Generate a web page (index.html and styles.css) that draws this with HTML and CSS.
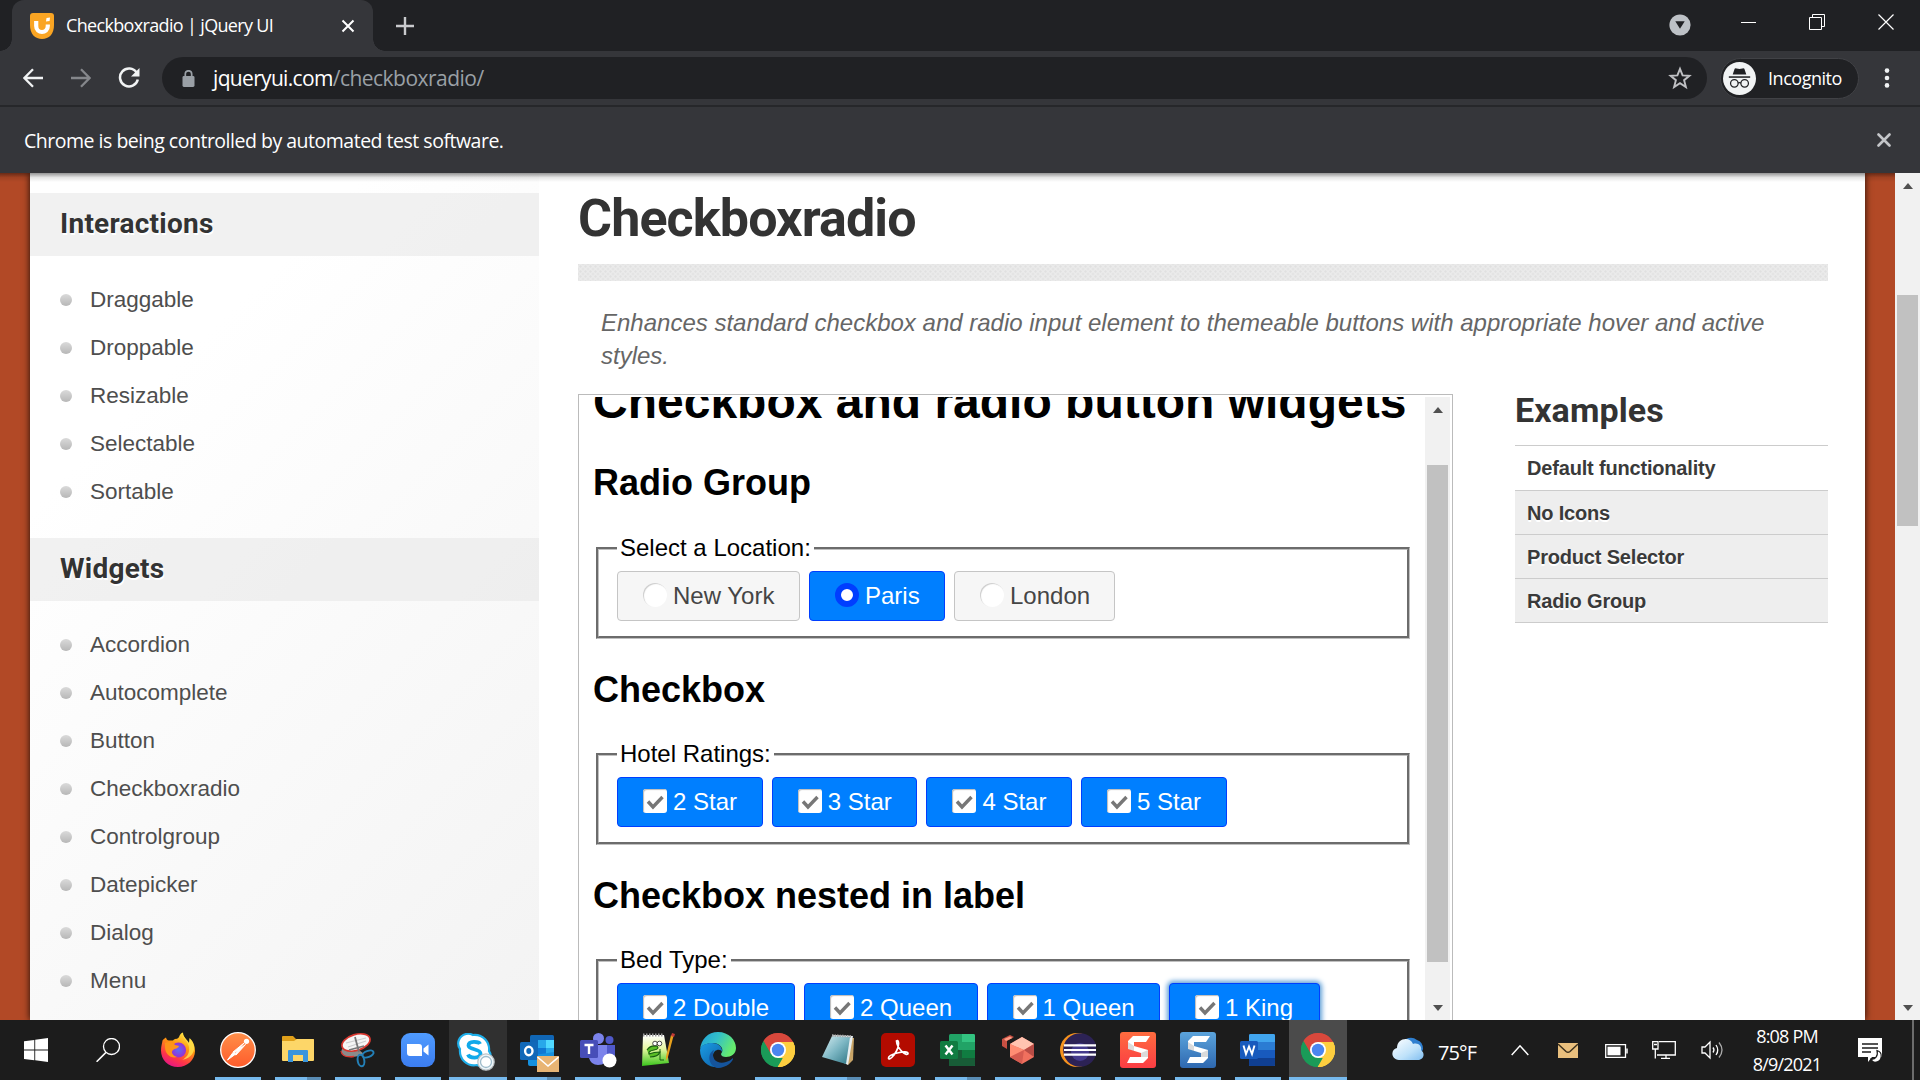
FILE: index.html
```html
<!DOCTYPE html>
<html lang="en">
<head>
<meta charset="utf-8">
<title>Checkboxradio | jQuery UI</title>
<link rel="stylesheet" href="styles.css">
</head>
<body>
<svg class="defs" width="0" height="0" aria-hidden="true">
  <defs>
    <linearGradient id="gFox" x1="0.8" y1="0" x2="0.3" y2="1"><stop offset="0" stop-color="#fff44f"/><stop offset=".4" stop-color="#ff980e"/><stop offset=".75" stop-color="#ff3647"/><stop offset="1" stop-color="#e31587"/></linearGradient>
    <radialGradient id="gGlobe"><stop offset="0" stop-color="#5b6df8"/><stop offset="1" stop-color="#9a2fd0"/></radialGradient>
    <linearGradient id="gPost" x1="0" y1="0" x2="0" y2="1"><stop offset="0" stop-color="#ff8f4a"/><stop offset="1" stop-color="#ff5b2b"/></linearGradient>
    <linearGradient id="gZoom" x1="0" y1="0" x2="0" y2="1"><stop offset="0" stop-color="#4f9bff"/><stop offset="1" stop-color="#3c7df0"/></linearGradient>
    <linearGradient id="gEdgeTop" x1="0" y1="0" x2="1" y2=".4"><stop offset="0" stop-color="#1f9fd8"/><stop offset=".5" stop-color="#33c0c8"/><stop offset="1" stop-color="#66eb6e"/></linearGradient>
    <linearGradient id="gEdgeBody" x1="0" y1="0" x2="1" y2="1"><stop offset="0" stop-color="#1b9de2"/><stop offset="1" stop-color="#0c59a4"/></linearGradient>
    <linearGradient id="gRed" x1="0" y1="0" x2="0" y2="1"><stop offset="0" stop-color="#ff6c3f"/><stop offset="1" stop-color="#fb3d44"/></linearGradient>
    <linearGradient id="gBlue" x1="0" y1="0" x2="0" y2="1"><stop offset="0" stop-color="#5ba4dc"/><stop offset="1" stop-color="#2e68b0"/></linearGradient>
    <linearGradient id="gCloud" x1="0" y1="0" x2="1" y2="1"><stop offset="0" stop-color="#ffffff"/><stop offset=".6" stop-color="#bfe2fa"/><stop offset="1" stop-color="#7fbdf0"/></linearGradient>
    <linearGradient id="gNote" x1="0" y1="0" x2="1" y2="1"><stop offset="0" stop-color="#d8eef2"/><stop offset=".5" stop-color="#7db7c4"/><stop offset="1" stop-color="#2f7685"/></linearGradient>
    <linearGradient id="gFrog" x1="0" y1="0" x2="0" y2="1"><stop offset="0" stop-color="#fff"/><stop offset=".45" stop-color="#e6f7a0"/><stop offset="1" stop-color="#39c51b"/></linearGradient>
    <symbol id="chrome" viewBox="0 0 34 34">
      <path d="M17 17 L2.3 8.5 A17 17 0 0 1 31.7 8.5 Z" fill="#d8483c"/>
      <path d="M17 17 L31.7 8.5 A17 17 0 0 1 17 34 Z" fill="#fdce3f"/>
      <path d="M17 17 L17 34 A17 17 0 0 1 2.3 8.5 Z" fill="#1a9b58"/>
      <path d="M17 9 H32 A17 17 0 0 1 17 34 L24 21 Z" fill="#fdce3f"/>
      <path d="M2.6 8 L10 21 L17 25 H24 L16.5 34 A17 17 0 0 1 2.6 8 Z" fill="#1a9b58"/>
      <path d="M2.6 8 A17 17 0 0 1 32 9 H17 L10 21 Z" fill="#d8483c"/>
      <path d="M24 21 L16.7 34 A17 17 0 0 0 32 9 H17 Z" fill="#fdce3f"/>
      <circle cx="17" cy="17" r="8" fill="#fff"/><circle cx="17" cy="17" r="6.2" fill="#4a86f0"/>
    </symbol>
    <symbol id="tick" viewBox="0 0 24 24"><path d="M5 12.5 L10 18 L19.5 8" fill="none" stroke="#777" stroke-width="3.4"/></symbol>
    <symbol id="snag" viewBox="0 0 36 36">
      <path d="M13 4 H30 L26 10 H14 V14 L28 18 V26 L23 31 H7 L10 25 H21 V21 L8 17 V9 Z" fill="#fff"/>
      <path d="M8 10 L14 14 V19 L8 17 Z M21 21 L28 18 V25 L21 25 Z" fill="#000" opacity=".14"/>
    </symbol>
  </defs>
</svg>

<div class="screen">
  <header class="browser">
    <div class="tabstrip">
      <div class="tab">
        <svg class="favicon" viewBox="0 0 24 26"><path d="M0 3 Q0 0 3 0 H21 Q24 0 24 3 V12 C24 21 19 26 12 26 C5 26 0 21 0 12Z" fill="#faa523"/><path d="M6.2 8 V13 C6.2 21 17.8 21 17.8 13 V11.5" fill="none" stroke="#fff" stroke-width="4.2"/><path d="M16.5 5 L20 4.5 L19.6 8 L16 8.5Z" fill="#fff"/></svg>
        <span class="tab-title">Checkboxradio | jQuery UI</span>
        <svg class="tab-close" viewBox="0 0 14 14"><path d="M1.5 1.5 L12.5 12.5 M12.5 1.5 L1.5 12.5" stroke="#fff" stroke-width="2"/></svg>
      </div>
      <svg class="newtab" viewBox="0 0 18 18"><path d="M9 0 V18 M0 9 H18" stroke="#c9cacd" stroke-width="2.4"/></svg>
      <div class="winctl">
        <svg class="ctl-search" viewBox="0 0 22 22"><circle cx="11" cy="11" r="10.6" fill="#bdc1c6"/><path d="M6.3 7.3 H15.7 L11 14.8Z" fill="#202124"/></svg>
        <svg class="ctl-min" viewBox="0 0 16 16"><path d="M0 8.5 H15" stroke="#fff"/></svg>
        <svg class="ctl-max" viewBox="0 0 16 16"><path d="M.5 3.5 H12.5 V15.5 H.5Z M3.5 3.5 V.5 H15.5 V12.5 H12.5" fill="none" stroke="#fff"/></svg>
        <svg class="ctl-close" viewBox="0 0 16 16"><path d="M.5 .5 L15.5 15.5 M15.5 .5 L.5 15.5" stroke="#fff" stroke-width="1.2"/></svg>
      </div>
    </div>
    <div class="toolbar">
      <svg class="nav-back" viewBox="0 0 20 20"><path d="M20 10 H2 M10 1.2 L1.4 10 L10 18.8" fill="none" stroke="#f1f3f4" stroke-width="2.3"/></svg>
      <svg class="nav-fwd" viewBox="0 0 20 20"><path d="M0 10 H18 M10 1.2 L18.6 10 L10 18.8" fill="none" stroke="#85878b" stroke-width="2.3"/></svg>
      <svg class="nav-reload" viewBox="0 0 22 22"><path d="M18.6 5.6 A9 9 0 1 0 19.8 12.5" fill="none" stroke="#f1f3f4" stroke-width="2.5"/><path d="M21.5 1 V9.4 H13Z" fill="#f1f3f4"/></svg>
      <div class="omnibox">
        <svg class="lock" viewBox="0 0 12 17"><rect x="0" y="6" width="12" height="11" rx="1.4" fill="#9aa0a6"/><path d="M2.8 7 V4 A3.2 3.2 0 0 1 9.2 4 V7" fill="none" stroke="#9aa0a6" stroke-width="1.7"/></svg>
        <span class="url"><span class="host">jqueryui.com</span><span class="path">/checkboxradio/</span></span>
        <svg class="star" viewBox="0 0 24 24"><path d="M12 2.8 L14.6 9.4 L21.4 9.8 L16.1 14.2 L17.9 21 L12 17.2 L6.100 21 L7.9 14.2 L2.6 9.8 L9.4 9.4Z" fill="none" stroke="#c0c1c4" stroke-width="1.9"/></svg>
      </div>
      <div class="incognito">
        <svg viewBox="0 0 34 34"><circle cx="17" cy="17" r="17" fill="#f1f3f4"/><path d="M12 7 Q12.6 6 14 6.7 Q17 7.6 20 6.7 Q21.4 6 22 7 L24 13 H10Z" fill="#202124"/><path d="M6 15.5 H28" stroke="#202124" stroke-width="1.6"/><circle cx="11.7" cy="22" r="3.9" fill="none" stroke="#202124" stroke-width="1.3"/><circle cx="22.3" cy="22" r="3.9" fill="none" stroke="#202124" stroke-width="1.3"/><path d="M15.4 21.7 Q17 20.7 18.6 21.7" fill="none" stroke="#202124" stroke-width="1.3"/></svg>
        <span>Incognito</span>
      </div>
      <svg class="dots" viewBox="0 0 6 20"><circle cx="3" cy="2.6" r="2.3" fill="#f1f3f4"/><circle cx="3" cy="10" r="2.3" fill="#f1f3f4"/><circle cx="3" cy="17.4" r="2.3" fill="#f1f3f4"/></svg>
    </div>
    <div class="infobar">
      <span>Chrome is being controlled by automated test software.</span>
      <svg viewBox="0 0 14 14"><path d="M1.5 1.5 L12.5 12.5 M12.5 1.5 L1.5 12.5" stroke="#c4c6c9" stroke-width="2.6" stroke-linecap="round"/></svg>
    </div>
  </header>

  <div class="viewport">
    <div class="page">
      <aside class="sidebar">
        <h3 class="side-head">Interactions</h3>
        <ul class="side-list"><li>Draggable</li><li>Droppable</li><li>Resizable</li><li>Selectable</li><li>Sortable</li></ul>
        <h3 class="side-head widgets">Widgets</h3>
        <ul class="side-list"><li>Accordion</li><li>Autocomplete</li><li>Button</li><li>Checkboxradio</li><li>Controlgroup</li><li>Datepicker</li><li>Dialog</li><li>Menu</li></ul>
      </aside>
      <main class="content">
        <h1 class="entry-title">Checkboxradio</h1>
        <div class="rule"></div>
        <p class="desc">Enhances standard checkbox and radio input element to themeable buttons with appropriate hover and active<br>styles.</p>
        <div class="columns">
          <div class="demo-frame">
            <div class="demo">
              <h1 class="demo-title">Checkbox and radio button widgets</h1>
              <h2>Radio Group</h2>
              <fieldset><legend>Select a Location:</legend>
                <div class="row">
                  <div class="btn w-ny"><i class="radio"></i>New York</div>
                  <div class="btn on w-paris"><i class="radio dot"></i>Paris</div>
                  <div class="btn w-lon"><i class="radio"></i>London</div>
                </div>
              </fieldset>
              <h2>Checkbox</h2>
              <fieldset><legend>Hotel Ratings:</legend>
                <div class="row">
                  <div class="btn on w-star"><svg class="check"><use href="#tick"/></svg>2 Star</div>
                  <div class="btn on w-star"><svg class="check"><use href="#tick"/></svg>3 Star</div>
                  <div class="btn on w-star"><svg class="check"><use href="#tick"/></svg>4 Star</div>
                  <div class="btn on w-star"><svg class="check"><use href="#tick"/></svg>5 Star</div>
                </div>
              </fieldset>
              <h2>Checkbox nested in label</h2>
              <fieldset><legend>Bed Type:</legend>
                <div class="row">
                  <div class="btn on w-double"><svg class="check"><use href="#tick"/></svg>2 Double</div>
                  <div class="btn on w-queen"><svg class="check"><use href="#tick"/></svg>2 Queen</div>
                  <div class="btn on w-queen"><svg class="check"><use href="#tick"/></svg>1 Queen</div>
                  <div class="btn on focus w-king"><svg class="check"><use href="#tick"/></svg>1 King</div>
                </div>
              </fieldset>
            </div>
            <div class="scrollbar inner"><i class="up"></i><i class="thumb"></i><i class="down"></i></div>
          </div>
          <nav class="examples">
            <h2>Examples</h2>
            <ul><li class="current">Default functionality</li><li>No Icons</li><li>Product Selector</li><li>Radio Group</li></ul>
          </nav>
        </div>
      </main>
    </div>
    <div class="scrollbar outer"><i class="up"></i><i class="thumb"></i><i class="down"></i></div>
  </div>

  <footer class="taskbar">
    <div class="cell wide"><svg width="24" height="24" viewBox="0 0 24 24"><path d="M0 3.2 L10.3 1.9 V11.4 H0Z M11.2 1.7 L24 0 V11.4 H11.2Z M0 12.4 H10.3 V22.2 L0 20.9Z M11.2 12.4 H24 V24 L11.2 22.3Z" fill="#fff"/></svg></div>
    <div class="cell wide"><svg width="24" height="24" viewBox="0 0 24 24"><circle cx="15.5" cy="8.5" r="8" fill="none" stroke="#fff" stroke-width="1.3"/><path d="M10 14.4 L.6 23.8" stroke="#fff" stroke-width="1.5"/></svg></div>
    <div class="apps">
      <div class="cell"><svg width="36" height="36" viewBox="0 0 36 36"><path d="M2.500 8.500 C3.5 7 5 6 6 5.5 C6.300 7 7 8.500 9 8.500 H13 C15 6 17 8 19 5 C20 2.500 21 1 23 .5 C23 5 27 8 28.5 11 C30 10 29.500 7 29.500 6 C33 9 35 14 35 19 C35 28 27 35 18 35 C8 35 1 27.500 1 18.500 C1 14.500 2 12 2.500 8.500Z" fill="url(#gFox)"/><path d="M22.500 1 C22 6 28 9 29 15 C30 22 26 26 22 28 C32 26 35 19 34 14 C33 10 31 8 29.500 6.500 L29 11 C27 7 23 5 22.500 1Z" fill="#ffe14a" opacity=".85"/><circle cx="18.500" cy="18" r="7.600" fill="url(#gGlobe)"/><path d="M5 11 C9 9 13 10 15 13 L19 14 C18 17 15 16 13 18 C10 21 14 24 17 25 C11 27 5 22 5 15Z" fill="#ff9419"/></svg></div>
      <div class="cell run"><svg width="36" height="36" viewBox="0 0 36 36"><circle cx="18" cy="18" r="17.300" fill="url(#gPost)" stroke="#fff" stroke-width="1.300"/><circle cx="26.500" cy="9.300" r="2.600" fill="#fff"/><path d="M24 11 L13 20 L15.500 21.500 Z M25.500 12.500 L16 23 L13.500 21.500Z M13 20.500 L7.500 28 L15 22.500Z" fill="#fff" stroke="#fff" stroke-width="1"/></svg></div>
      <div class="cell run multi"><svg width="34" height="34" viewBox="0 0 34 34"><path d="M1 4 Q1 3 2 3 H12 L15 6 H32 Q33 6 33 7 V12 H1Z" fill="#e0a01a"/><path d="M1 8 H13 L16 6 H32 Q33 6 33 7 V27 Q33 28 32 28 H2 Q1 28 1 27Z" fill="#fdd668"/><path d="M7 29 V18 Q7 17 8 17 H26 Q27 17 27 18 V29 H22 V22 H12 V29Z" fill="#3a95dc"/></svg></div>
      <div class="cell run"><svg width="36" height="36" viewBox="0 0 36 36"><path d="M2 17 L14 14 L24 22 Q14 27 4 24 Q0 21 2 17Z" fill="#8b8b8b"/><path d="M1 19 Q2 26 14 24.500" stroke="#d8372f" stroke-width="1.300" fill="none"/><ellipse cx="16" cy="10.500" rx="14.500" ry="8" fill="#f5f5f5" stroke="#d8372f" stroke-width="1.700" transform="rotate(-17 16 10.500)"/><path d="M6 11 L26 6 M8 15 L26 9" stroke="#ccc" stroke-width="1.200"/><path d="M15 5 L19 20 M24 14 L9 18" stroke="#777" stroke-width="1.800"/><ellipse cx="28" cy="22" rx="5.800" ry="3" transform="rotate(-20 28 22)" fill="none" stroke="#2380b8" stroke-width="2"/><ellipse cx="21" cy="28.500" rx="3.300" ry="5.800" transform="rotate(-10 21 28.500)" fill="none" stroke="#2380b8" stroke-width="2"/></svg></div>
      <div class="cell run"><svg width="34" height="34" viewBox="0 0 34 34"><rect width="34" height="34" rx="9" fill="url(#gZoom)"/><path d="M6 11 H18 Q21 11 21 14 V23 H9 Q6 23 6 20Z M22.500 15.500 L27.500 11.500 V22.500 L22.500 18.500Z" fill="#fff"/></svg></div>
      <div class="cell full tint"><svg class="skype" width="38" height="38" viewBox="0 0 38 38"><path d="M9 1 C12 0 14 1 16 2 C26 1 33 9 32 18 C35 22 34 30 28 32 C25 33 22 33 20 32 C10 34 2 26 3 16 C-1 10 2 3 9 1Z" fill="#fff" stroke="#1eaee9" stroke-width="2.200"/><path d="M23 11 C22 8.500 11.500 7.500 11.500 12.500 C11.500 17 23.500 15.500 23.500 20.500 C23.500 26 12.500 25.500 11 21.500" fill="none" stroke="#10a9ea" stroke-width="3.800"/><circle cx="29" cy="29" r="8.200" fill="#eef6fa" stroke="#bcc3c7" stroke-width="1.200"/><circle cx="29" cy="29" r="5.500" fill="#fff" stroke="#9ebccb" stroke-width="1.300"/></svg></div>
      <div class="cell run multi"><svg class="outlook" width="40" height="38" viewBox="0 0 40 38"><rect x="11" y="1" width="24" height="30" rx="1.500" fill="#1066b5"/><path d="M19 6 H27 V14 H19Z" fill="#28a8ea"/><path d="M27 6 H35 V14 H27Z" fill="#50d9ff"/><path d="M19 14 H27 V22 H19Z" fill="#0f78d4"/><path d="M27 14 H35 V22 H27Z" fill="#28a8ea"/><path d="M9 22 L35 18 V32 H11 Q9 32 9 30Z" fill="#1490df"/><rect x="1" y="8" width="18" height="18" rx="1.500" fill="#1168b8"/><ellipse cx="9.800" cy="17" rx="3.700" ry="4.200" fill="none" stroke="#fff" stroke-width="2.400"/><rect x="18" y="22" width="22" height="16" fill="#e8b574"/><path d="M18.500 23 L29 32 L39.500 23" fill="none" stroke="#fff" stroke-width="1.600"/></svg></div>
      <div class="cell run"><svg width="38" height="36" viewBox="0 0 38 36"><circle cx="19.500" cy="6.500" r="5.500" fill="#7b83eb"/><circle cx="30.500" cy="8" r="4" fill="#5059c9"/><path d="M24 13 H36 V23 Q36 30 29 30 L24 28Z" fill="#5059c9"/><path d="M10 13 H28 V24 Q28 33 19 33 Q12 33 10 26Z" fill="#7b83eb"/><rect x="1" y="8" width="18" height="18" rx="1.500" fill="#474eb8"/><path d="M5.500 13 H14.500 M10 13 V22" stroke="#fff" stroke-width="2.400"/><circle cx="30.500" cy="28.500" r="7" fill="#fff"/></svg></div>
      <div class="cell run"><svg width="36" height="36" viewBox="0 0 36 36"><path d="M3 3 H24 L29 31 L2 34Z" fill="url(#gFrog)"/><path d="M3 3 H24" stroke="#999" stroke-width="3" stroke-dasharray="1.500 1.500"/><path d="M7 18 Q10 13 17 14 Q20 17 14 18 Q8 19 9 22 Q14 20 20 20 Q18 25 10 25" fill="#58bd24" stroke="#175d10" stroke-width="1.100"/><path d="M20 17 V28 H24" fill="none" stroke="#175d10" stroke-width="1"/><circle cx="15" cy="11.500" r="2.300" fill="#fff" stroke="#222" stroke-width=".8"/><circle cx="19.500" cy="11.500" r="2.300" fill="#fff" stroke="#222" stroke-width=".8"/><path d="M33.500 4 L28 25 L26 29 L26 24.500 L31 3Z" fill="#e8a11c"/><path d="M32 1 L35 2 L34 5 L31 4Z" fill="#c23b37"/></svg></div>
      <div class="cell"><svg width="36" height="36" viewBox="0 0 36 36"><path d="M0 18 C1 7 8 0 18 0 C29 0 36 8 36 16 C36 22 31 25 26 25 C23 25 21 24 21 22 C25 17 20 11 13 11 C7 11 1 13 0 18Z" fill="url(#gEdgeTop)"/><path d="M0 18 C1 13 6 11 12 11 C18 11 23 15 22 20 C21 16 13 17 13 24 C13 30 19 34 26 33 C15 39 0 33 0 18Z" fill="url(#gEdgeBody)"/><path d="M14 18 C10 27 18 33 26 30 C29 29 31 28 33 26 C34 29 26 36 18 36 C9 35 6 22 14 18Z" fill="#15549c"/></svg></div>
      <div class="cell run"><svg width="34" height="34"><use href="#chrome"/></svg></div>
      <div class="cell run multi"><svg width="36" height="34" viewBox="0 0 36 34"><path d="M15 4 L34 5 L33 27 L28 32Z" fill="#c9a568"/><path d="M13 2 L33 3 L28 32 L24 30Z" fill="#e8eef0"/><path d="M12 3 L30 4 L26 31 L2 24Z" fill="url(#gNote)"/><path d="M12 2.500 L32 3.500" stroke="#aaa" stroke-width="2.500" stroke-dasharray="1.500 1"/></svg></div>
      <div class="cell run"><svg width="34" height="34" viewBox="0 0 34 34"><rect width="34" height="34" rx="5" fill="#b30b00"/><path d="M15.500 8 C18.500 6 18 14 15.500 18 C13 23 8 28 7.500 25 C7.500 21 27 16.500 27 20.500 C26 24 16 16 15.500 8Z" fill="none" stroke="#fff" stroke-width="1.700"/></svg></div>
      <div class="cell run multi"><svg width="36" height="34" viewBox="0 0 36 34"><rect x="9" y="1" width="26" height="32" rx="1.500" fill="#21a366"/><path d="M22 1 H33.500 Q35 1 35 2.500 V9 H22Z" fill="#33c481"/><path d="M9 17 H35 V31.500 Q35 33 33.500 33 H9Z" fill="#185c37"/><path d="M22 17 H35 V25 H22Z" fill="#107c41"/><rect x="0" y="8" width="18" height="18" rx="1.500" fill="#107c41"/><path d="M5.500 12.500 L12.500 21.500 M12.500 12.500 L5.500 21.500" stroke="#fff" stroke-width="2.500"/></svg></div>
      <div class="cell run"><svg width="34" height="32" viewBox="0 0 34 32"><path d="M1 5 L9 1 L13 3 L6 7 V15 L1 12Z" fill="#c75043"/><path d="M3 5 L9 2.500 L11.500 4 L5 7Z" fill="#ff9b83"/><path d="M21 3 L33 10 V23 L21 30 L9 23 V10Z" fill="#f0705e"/><path d="M21 3 L33 10 L23 16 L9 10Z" fill="#ffc3b0"/><path d="M33 10 V23 L23 16Z" fill="#b84c45"/><path d="M9 10 L23 16 L9 23Z" fill="#ff8d73"/><path d="M9 23 L23 16 L21 30Z" fill="#d65b50"/></svg></div>
      <div class="cell run"><svg width="36" height="36" viewBox="0 0 36 36"><circle cx="17" cy="18" r="17" fill="#f7941e"/><circle cx="20" cy="18" r="16.800" fill="#2c2255"/><circle cx="20" cy="20" r="9" fill="#443a8c"/><path d="M4 13.300 H36 M4 18 H36 M4 22.700 H36" stroke="#fff" stroke-width="2.200"/></svg></div>
      <div class="cell run"><svg width="36" height="36" viewBox="0 0 36 36"><rect width="36" height="36" rx="3" fill="url(#gRed)"/><use href="#snag"/></svg></div>
      <div class="cell run"><svg width="36" height="36" viewBox="0 0 36 36"><rect width="36" height="36" rx="3" fill="url(#gBlue)"/><use href="#snag"/></svg></div>
      <div class="cell run"><svg width="36" height="34" viewBox="0 0 36 34"><rect x="9" y="1" width="26" height="32" rx="1.500" fill="#2b7cd3"/><path d="M9 9 V2.500 Q9 1 10.500 1 H33.500 Q35 1 35 2.500 V9Z" fill="#41a5ee"/><path d="M9 17 H35 V25 H9Z" fill="#185abd"/><path d="M9 25 H35 V31.500 Q35 33 33.500 33 H10.500 Q9 33 9 31.500Z" fill="#103f91"/><rect x="0" y="8" width="18" height="18" rx="1.500" fill="#185abd"/><path d="M3.500 12.500 L6 21 L9 13.500 L12 21 L14.500 12.500" fill="none" stroke="#fff" stroke-width="1.900"/></svg></div>
      <div class="cell full active"><svg width="34" height="34"><use href="#chrome"/></svg></div>
    </div>
    <div class="tray">
      <svg class="cloud" viewBox="0 0 32 24"><path d="M14 2 Q20 -1 25 3 Q31 5 31 12 L28 20 H14Z" fill="#2f7fd0"/><path d="M7 23 C-2 22 -1 12 5 11 C5 1 18 -1 21 7 C27 5 30 10 29 13 C34 17 31 23 26 23Z" fill="url(#gCloud)"/></svg>
      <span class="temp">75°F</span>
      <svg class="chev" viewBox="0 0 18 12"><path d="M.7 11 L9 1.800 L17.300 11" fill="none" stroke="#fff" stroke-width="1.500"/></svg>
      <svg class="mail" viewBox="0 0 20 15"><rect width="20" height="15" fill="#e9bf7d"/><path d="M0 1 L8 8.500 Q10 10 12 8.500 L20 1" fill="none" stroke="#3b2f1c" stroke-width="1.500"/></svg>
      <svg class="batt" viewBox="0 0 23 14"><path d="M.7 .7 H20.500 V13.300 H.7Z" fill="none" stroke="#fff" stroke-width="1.300"/><rect x="2.500" y="2.700" width="13" height="8.600" fill="#fff"/><path d="M22 4.500 V9.500" stroke="#fff" stroke-width="1.500"/></svg>
      <svg class="net" viewBox="0 0 24 18"><path d="M7 .7 H23.300 V14 H5 M14 14 V17 M9 17.300 H18 M.7 .7 H6 V8 H.7Z M3.300 8 V17.500 M2 3.500 H5" fill="none" stroke="#fff" stroke-width="1.300"/></svg>
      <svg class="vol" viewBox="0 0 23 20"><path d="M1 7 H4 L9 2 V18 L4 13 H1Z" fill="none" stroke="#fff" stroke-width="1.300"/><path d="M12 7.500 Q14 10 12 12.500 M15 5 Q18.500 10 15 15" fill="none" stroke="#fff" stroke-width="1.300"/><path d="M18 2.500 Q24 10 18 17.500" fill="none" stroke="#aaa" stroke-width="1.300"/></svg>
      <div class="clock"><span>8:08 PM</span><span>8/9/2021</span></div>
      <svg class="notif" viewBox="0 0 26 25"><path d="M0 0 H24 V19 H14 L10 24 V19 H0Z" fill="#fff"/><path d="M4 6 H20 M4 10 H20 M4 14 H13" stroke="#1c1c1c" stroke-width="1.300"/><path d="M19 12.500 C25 14 25 24 17 24.300 C15 24.300 13.500 22.500 13 21 C17 22 20.500 18 19 12.500Z" fill="#fff" stroke="#1c1c1c" stroke-width="1.200"/></svg>
      <i class="peek"></i>
    </div>
  </footer>
</div>
</body>
</html>
```
FILE: styles.css
```css
* { box-sizing: border-box; }
html, body { margin: 0; height: 100%; overflow: hidden; }
body { font-family: "Liberation Sans", Arial, sans-serif; background: #202124; }
h1, h2, h3, ul, p, fieldset { margin: 0; padding: 0; }
ul { list-style: none; }
svg { display: block; flex: none; }
.defs { position: absolute; }
.screen { width: 1920px; height: 1080px; display: flex; flex-direction: column; overflow: hidden; }

/* browser chrome */
.browser { flex: none; height: 173px; background: #35363a; color: #fff; font-family: "Open Sans", "Noto Sans", sans-serif; }
.tabstrip { height: 51px; background: #202124; display: flex; align-items: center; padding-left: 12px; }
.tab { position: relative; width: 361px; height: 51px; background: #35363a; border-radius: 12px 12px 0 0; display: flex; align-items: center; padding: 0 18px; }
.tab::before, .tab::after { content: ""; position: absolute; bottom: 0; width: 12px; height: 12px; }
.tab::before { left: -12px; background: radial-gradient(circle at 0 0, #202124 11.5px, #35363a 12px); }
.tab::after { right: -12px; background: radial-gradient(circle at 100% 0, #202124 11.5px, #35363a 12px); }
.favicon { width: 24px; height: 26px; }
.tab-title { margin-left: 12px; padding-bottom: 1px; font-size: 18px; letter-spacing: -.66px; white-space: nowrap; flex: 1; }
.tab-close { width: 14px; height: 14px; }
.newtab { width: 18px; height: 18px; margin-left: 23px; }
.winctl { margin-left: auto; display: flex; align-items: center; padding-right: 26px; height: 51px; padding-bottom: 8px; }
.ctl-search { width: 22px; height: 22px; margin: 7px 50px 0 0; }
.ctl-min, .ctl-max, .ctl-close { width: 16px; height: 16px; }
.ctl-min { margin-right: 52px; }
.ctl-max { margin-right: 53px; }

.toolbar { height: 56px; display: flex; align-items: center; padding: 0 30px 0 23px; border-bottom: 2px solid #26272a; }
.nav-back, .nav-fwd { width: 20px; height: 20px; }
.nav-fwd { margin-left: 28px; }
.nav-reload { width: 22px; height: 22px; margin-left: 27px; }
.omnibox { width: 1545px; height: 42px; margin-left: 22px; border-radius: 21px; background: #202124; display: flex; align-items: center; padding: 0 20px; }
.lock { width: 13px; height: 17px; margin-top: 1px; }
.url { flex: 1; margin-left: 18px; font-size: 21px; letter-spacing: -.67px; white-space: nowrap; }
.url .path { color: #9aa0a6; letter-spacing: -.52px; }
.star { width: 24px; height: 24px; margin-right: -5px; }
.incognito { width: 139px; height: 41px; margin-left: 13px; border: 1px solid #414246; border-radius: 21px; background: #202124; display: flex; align-items: center; padding-left: 2px; font-size: 18px; letter-spacing: -.47px; }
.incognito svg { width: 33px; height: 33px; }
.incognito span { margin-left: 12px; }
.dots { width: 6px; height: 20px; margin-left: auto; }
.infobar { height: 66px; display: flex; align-items: center; justify-content: space-between; padding: 0 29px 0 24px; font-size: 19.5px; letter-spacing: -.49px; }
.infobar svg { width: 14px; height: 14px; }

/* web page */
.viewport { position: relative; height: 847px; flex: none; background: #b24926; display: flex; overflow: hidden; }
.viewport::before { content: ""; position: absolute; z-index: 2; left: 0; right: 25px; top: 0; height: 9px; background: linear-gradient(rgba(0,0,0,.42), rgba(0,0,0,.1) 50%, transparent); }
.page { width: 1835px; height: 847px; margin-left: 30px; background: #fff; box-shadow: 0 0 7px rgba(0,0,0,.85); display: flex; }
.sidebar { width: 509px; padding-top: 20px; background: linear-gradient(135deg, #fff 25%, #f3f3f3); }
.side-head { height: 63px; padding: 0 30px; background: rgba(232,232,232,.6); color: #333; font: bold 28px/61px Roboto, sans-serif; letter-spacing: .25px; text-shadow: 1px 2px 0 #fff; }
.side-list { padding: 19px 30px 23px; }
.side-list li { height: 48px; display: flex; align-items: center; gap: 18px; font-size: 22.5px; color: #4e4e4e; line-height: 46px; padding-top: 1px; }
.side-list li::before { content: ""; width: 12px; height: 12px; margin-top: 1px; border-radius: 50%; background: linear-gradient(#dadada, #b7b7b7); }
.content { width: 1250px; margin-left: 39px; }
.entry-title { margin-top: 16px; height: 60px; font: bold 52px/60px Roboto, sans-serif; color: #333; letter-spacing: -.87px; }
.rule { height: 17px; margin-top: 15px; background: radial-gradient(circle, #e0e0e0 .8px, transparent 1.500px) 0 0/5px 5px, radial-gradient(circle, #e0e0e0 .8px, transparent 1.500px) 2.500px 2.500px/5px 5px, #ebebeb; }
.desc { margin: 25px 0 22px; padding-left: 23px; font-size: 24px; line-height: 33px; font-style: italic; color: #666; white-space: nowrap; }
.columns { display: flex; justify-content: space-between; }
.demo-frame { width: 875px; height: 640px; border: 1px solid #bbb; padding: 2px; display: flex; }
.demo { width: 844px; padding: 0 12px; overflow: hidden; color: #000; }
.demo-title { margin-top: -22px; font: bold 48px/54px "Liberation Sans", Arial, sans-serif; white-space: nowrap; }
.demo h2 { margin: 30px 0 30px; font-size: 36px; line-height: 42px; }
.demo .demo-title + h2 { margin: 33px 0 31px; }
.demo fieldset { margin: 0 3px; height: 104px; border: 3px groove #c0c0c0; padding: 9px 18px 0; min-width: 0; }
.demo legend { padding: 0 3px; font-size: 24px; line-height: 26px; height: 27px; }
.row { display: flex; gap: 9px; white-space: nowrap; }
.btn { flex: none; height: 50px; padding: 0 0 0 25px; border: 1px solid #c5c5c5; border-radius: 4px; background: #f6f6f6; color: #454545; font-size: 24px; line-height: 48px; display: flex; align-items: center; }
.btn.on { background: #007fff; border-color: #003eff; color: #fff; }
.btn.focus { box-shadow: 0 0 5px 2px #5e9ed6; }
.w-ny { width: 183px; } .w-paris { width: 136px; } .w-lon { width: 161px; }
.w-star { width: 145.7px; } .w-double { width: 178px; } .w-queen { width: 173.5px; } .w-king { width: 151px; }
.radio { width: 24px; height: 24px; margin: -3px 6px 0 0; border-radius: 50%; background: #fff; box-shadow: inset 1px 1px 1px #ccc; }
.radio.dot { border: 6px solid #003eff; box-shadow: none; }
.check { width: 24px; height: 24px; margin: -2px 6px 0 0; border-radius: 3px; background: #fff; box-shadow: inset 1px 1px 1px #bbb; }

.examples { width: 313px; }
.examples h2 { height: 51px; font: bold 34px/32px Roboto, sans-serif; color: #333; letter-spacing: .1px; }
.examples ul { border-top: 1px solid #ccc; }
.examples li { height: 44px; padding-left: 12px; border-bottom: 1px solid #ccc; background: #eee; font-size: 20px; letter-spacing: -.18px; font-weight: bold; line-height: 45px; color: #3a3a3a; text-shadow: 0 2px 0 #fff; }
.examples li.current { background: #fff; height: 45px; }

.scrollbar { width: 25px; background: #f1f1f1; display: flex; flex-direction: column; align-items: center; }
.scrollbar i { flex: none; }
.scrollbar .up, .scrollbar .down { width: 0; height: 0; border: 5.5px solid transparent; border-top: 0; border-bottom: 6px solid #505050; }
.scrollbar .down { border-bottom: 0; border-top: 6px solid #505050; margin-top: auto; }
.scrollbar .thumb { width: 21px; background: #c1c1c1; }
.inner .up { margin-top: 10px; } .inner .thumb { margin-top: 52px; height: 497px; } .inner .down { margin-bottom: 20px; }
.outer { position: relative; z-index: 1; margin-left: 30px; }
.outer .up { margin-top: 10px; } .outer .thumb { margin-top: 106px; height: 231px; } .outer .down { margin-bottom: 9px; }

/* taskbar */
.taskbar { position: relative; z-index: 3; height: 60px; flex: none; background: #1c1c1c; display: flex; color: #fff; }
.cell { position: relative; width: 58px; height: 60px; display: flex; align-items: center; justify-content: center; }
.cell.wide { width: 72px; }
.apps { display: flex; gap: 2px; margin-left: 5px; }
.run::after, .full::after { content: ""; position: absolute; bottom: 0; left: 6px; width: 46px; height: 3px; background: #76b9ed; }
.full::after { left: 0; width: 58px; }
.multi::after { background: linear-gradient(90deg, #76b9ed 32px, #5a8db5 32px); }
.tint { background: #303030; }
.active { background: #4b4b4b; }
.skype { margin-top: 4px; margin-right: 4px; }
.outlook { margin-top: 5px; margin-left: 2px; }
.tray { flex: 1; display: flex; align-items: center; font-family: "Open Sans", "Noto Sans", sans-serif; }
.cloud { width: 32px; height: 24px; margin-left: 45px; margin-top: -2px; }
.temp { width: 72px; padding-left: 14px; font-size: 20px; letter-spacing: -.9px; margin-top: 4px; }
.chev { width: 18px; height: 12px; margin-left: 15px; }
.mail { width: 20px; height: 15px; margin-left: 29px; }
.batt { width: 23px; height: 14px; margin-left: 27px; margin-top: 1px; }
.net { width: 24px; height: 18px; margin-left: 24px; }
.vol { width: 23px; height: 20px; margin-left: 25px; }
.clock { width: 100px; margin-left: 13px; margin-top: -1px; display: flex; flex-direction: column; align-items: center; font-size: 18px; line-height: 28px; letter-spacing: -.8px; }
.notif { width: 26px; height: 25px; margin-left: 21px; }
.peek { width: 2px; height: 60px; margin-left: auto; margin-right: 6px; background: #6c6c6c; }
```
